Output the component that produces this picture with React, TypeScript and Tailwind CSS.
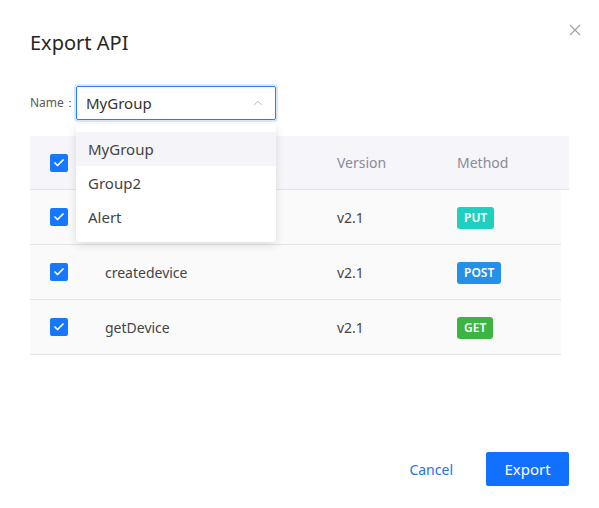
import { ChevronUp, Check } from "lucide-react";

const rows = [
    { name: "", version: "v2.1", method: "PUT", color: "bg-[#1fcfbf]" },
    { name: "createdevice", version: "v2.1", method: "POST", color: "bg-[#2491e6]" },
    { name: "getDevice", version: "v2.1", method: "GET", color: "bg-[#3cb543]" },
];

const options = ["MyGroup", "Group2", "Alert"];

function CheckBox() {
    return (
        <div className="w-[18px] h-[18px] rounded-[2px] bg-[#1677ff] flex items-center justify-center">
            <Check className="w-3 h-3 text-white" strokeWidth={3.5} />
        </div>
    );
}

export default function App() {
    return (
        <div
            className="relative w-[599px] h-[508px] bg-white text-[#333]"
            style={{ fontFamily: '"Noto Sans", "Open Sans", sans-serif' }}
        >
            <button className="absolute left-[569px] top-[24px] text-[#a3a3b3]">
                <svg width="12" height="12" viewBox="0 0 12 12" fill="none" stroke="currentColor" strokeWidth="1.3">
                    <path d="M1 1 L11 11 M11 1 L1 11" />
                </svg>
            </button>

            <div className="flex flex-col px-[30px] pt-[28px]">
                <h1 className="text-[20px] leading-[30px] text-[#262626]">Export API</h1>

                <div className="flex items-center mt-[28px]">
                    <span className="text-[12px] text-[#595959] w-[46px]">Name：</span>
                    <div className="relative">
                        <div className="w-[200px] h-[34px] border border-[#2f7cf6] rounded-[2px] shadow-[0_0_0_2px_rgba(47,124,246,0.18)] flex items-center justify-between pl-[9px] pr-[10px]">
                            <span className="text-[15px] text-[#333]">MyGroup</span>
                            <ChevronUp className="w-[14px] h-[14px] text-[#aaa]" strokeWidth={1.5} />
                        </div>
                        <div className="absolute z-10 left-0 top-[38px] w-[200px] bg-white rounded-[3px] shadow-[0_3px_10px_rgba(0,0,0,0.12)] py-[8px]">
                            {options.map((o, i) => (
                                <div
                                    key={o}
                                    className={`h-[34px] flex items-center px-[12px] text-[15px] text-[#444] ${i === 0 ? "bg-[#f5f5f9]" : ""}`}
                                >
                                    {o}
                                </div>
                            ))}
                        </div>
                    </div>
                </div>

                <div className="mt-[16px] flex flex-col">
                    <div className="h-[54px] bg-[#f5f5fa] border-b border-[#e3e3e8] flex items-center text-[14px] text-[#8a8a99]">
                        <div className="w-[75px] pl-[20px]"><CheckBox /></div>
                        <div className="w-[232px]"></div>
                        <div className="w-[120px]">Version</div>
                        <div>Method</div>
                    </div>
                    {rows.map((r) => (
                        <div
                            key={r.method}
                            className="h-[55px] w-[531px] bg-[#fafafa] border-b border-[#e3e3e8] flex items-center text-[14px] text-[#444]"
                        >
                            <div className="w-[75px] pl-[20px]"><CheckBox /></div>
                            <div className="w-[232px]">{r.name}</div>
                            <div className="w-[120px]">{r.version}</div>
                            <div>
                                <span className={`${r.color} text-white text-[12px] font-semibold rounded-[3px] px-[7px] h-[22px] inline-flex items-center`}>
                                    {r.method}
                                </span>
                            </div>
                        </div>
                    ))}
                </div>
            </div>

            <div className="absolute left-0 right-0 top-[452px] flex justify-end items-center pr-[30px] gap-[33px]">
                <button className="text-[14px] text-[#1a73e8]">Cancel</button>
                <button className="w-[83px] h-[34px] bg-[#1170ff] text-white text-[15px] rounded-[2px]">Export</button>
            </div>
        </div>
    );
}
